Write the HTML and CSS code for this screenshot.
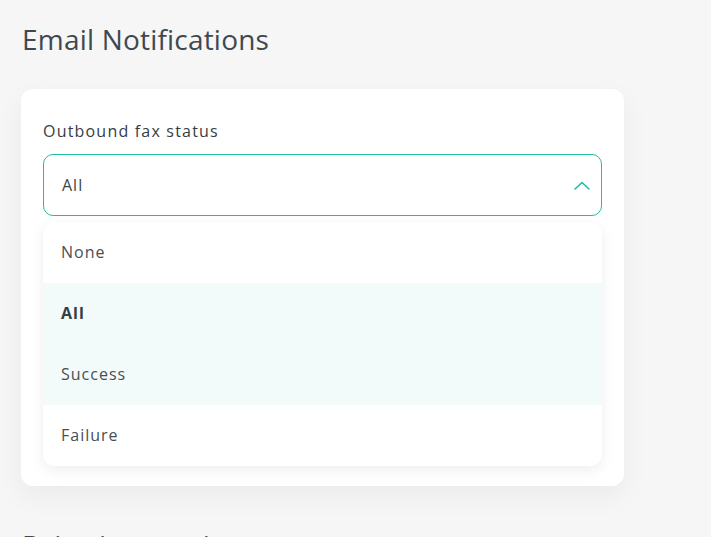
FILE: index.html
```html
<!DOCTYPE html>
<html lang="en">
<head>
<meta charset="utf-8">
<title>Email Notifications</title>
<link rel="stylesheet" href="styles.css">
</head>
<body>
  <main class="page">
    <h1 class="section-title">Email Notifications</h1>
    <section class="card">
      <label class="field-label">Outbound fax status</label>
      <div class="select">
        <span class="select-value">All</span>
        <svg class="chevron" width="16" height="9" viewBox="0 0 16 9" aria-hidden="true">
          <path d="M1 8 L8 1.5 L15 8" fill="none" stroke="#1fbf9f" stroke-width="1.6" stroke-linecap="round" stroke-linejoin="round"/>
        </svg>
      </div>
      <ul class="menu">
        <li class="option">None</li>
        <li class="option selected">All</li>
        <li class="option hover">Success</li>
        <li class="option">Failure</li>
      </ul>
    </section>
    <h2 class="section-title next">Drive integrations</h2>
  </main>
</body>
</html>
```

FILE: styles.css
```css
html, body {
  margin: 0;
  padding: 0;
  background: #f6f6f6;
  overflow: hidden;
}

body {
  font-family: "Open Sans", "Noto Sans", "DejaVu Sans", sans-serif;
  color: #3d464e;
}

.page {
  padding: 21px 0 0 21px;
  width: 603px;
}

.section-title {
  margin: 0 0 0 1px;
  font-size: 28px;
  font-weight: 400;
  line-height: 36px;
  color: #3f4850;
  letter-spacing: 0.2px;
}

.section-title.next {
  margin-top: 41px;
}

.card {
  margin-top: 32px;
  background: #ffffff;
  border-radius: 12px;
  box-shadow: 0 10px 28px rgba(0, 0, 0, 0.05);
  padding: 30px 22px 20px 22px;
}

.field-label {
  display: block;
  font-size: 16px;
  line-height: 24px;
  font-weight: 500;
  color: #343d46;
  letter-spacing: 1.2px;
}

.select {
  margin-top: 11px;
  height: 60px;
  border: 1px solid #1fbf9f;
  border-radius: 10px;
  display: flex;
  align-items: center;
  justify-content: space-between;
  padding: 0 11px 0 18px;
}

.select-value {
  font-size: 16px;
  color: #3d464e;
  letter-spacing: 1px;
}

.chevron {
  display: block;
}

.menu {
  list-style: none;
  margin: 6px 0 0 0;
  padding: 0;
  background: #ffffff;
  border-radius: 12px;
  box-shadow: 0 4px 14px rgba(0, 0, 0, 0.07);
  overflow: hidden;
}

.option {
  height: 61px;
  display: flex;
  align-items: center;
  padding-left: 18px;
  padding-bottom: 1px;
  box-sizing: border-box;
  font-size: 16px;
  color: #474f56;
  letter-spacing: 1px;
}

.option.selected {
  background: #f2fbf9;
  font-weight: 700;
  color: #363e46;
}

.option.hover {
  background: #f2fbf9;
}
```
